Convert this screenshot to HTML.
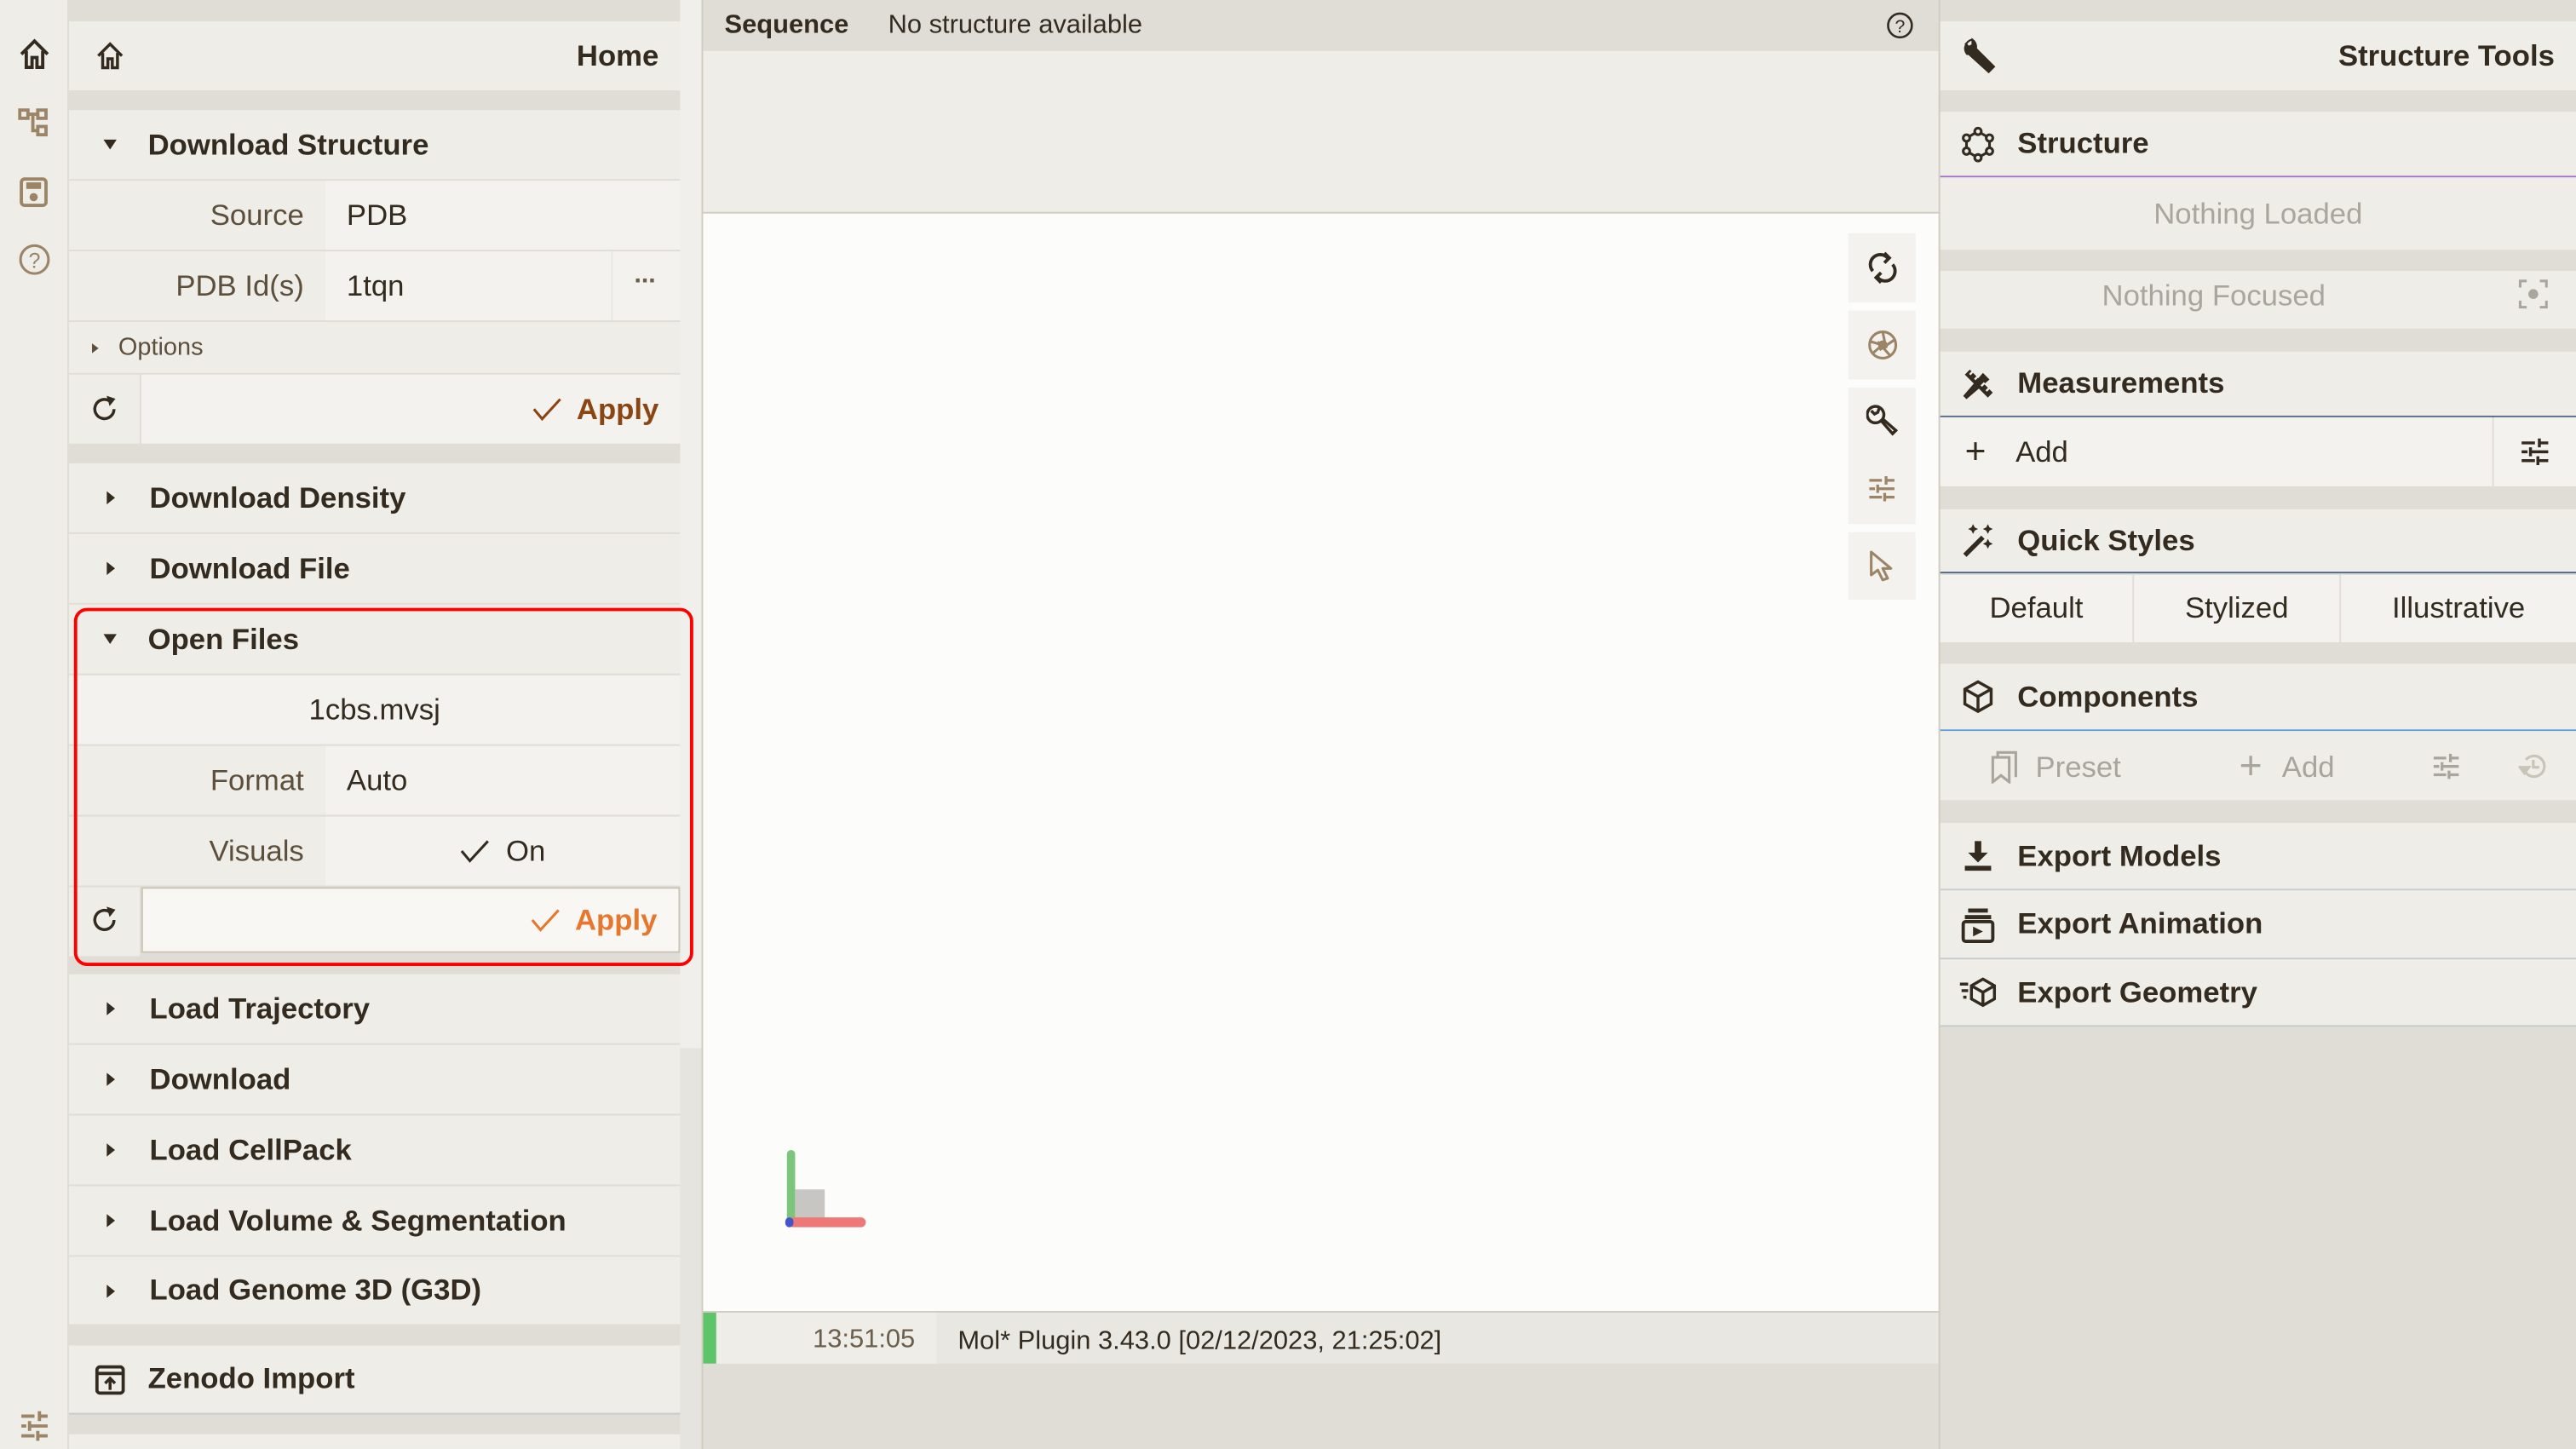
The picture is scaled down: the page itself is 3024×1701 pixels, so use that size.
<!DOCTYPE html>
<html><head><meta charset="utf-8"><style>
*{box-sizing:border-box;margin:0;padding:0}
html,body{width:3024px;height:1701px;overflow:hidden;background:#e0ddd6}
#s{position:absolute;left:0;top:0;width:1568px;height:882px;transform:scale(1.928571);transform-origin:0 0;font-family:"Liberation Sans",sans-serif;color:#332b1f;background:#e0ddd6}
.a{position:absolute}
.h{position:absolute;background:#eeede8;font-weight:bold;font-size:18px;display:flex;align-items:center}
.r{position:absolute;background:#f3f2ee;font-size:18px;display:flex;align-items:center}
.lb{position:absolute;background:#eeede8;color:#5c4f3c;text-align:right;padding-right:13px;font-size:18px;display:flex;align-items:center;justify-content:flex-end}
.tri{width:0;height:0;border-left:4px solid transparent;border-right:4px solid transparent;border-top:6px solid #332b1f;margin:0 19px 0 21px}
.tr{width:0;height:0;border-top:4px solid transparent;border-bottom:4px solid transparent;border-left:5px solid #332b1f;margin:0 21px 0 23px}
.ic{position:absolute;background:#f3f2ee}
svg{display:block}
</style></head><body><div id="s">
<div class="a" style="left:0;top:0;width:42px;height:882px;background:#eeede8;border-right:1px solid #e0ddd6"></div>
<svg class="a" style="left:11px;top:23px" width="20" height="20" viewBox="0 0 20 20"><path d="M2 10 L10 2 L18 10 M5 8 V18 H8.5 V12 H11.5 V18 H15 V8" fill="none" stroke="#332b1f" stroke-width="2"/></svg>
<svg class="a" style="left:11px;top:65px" width="20" height="20" viewBox="0 0 20 20" fill="none" stroke="#9c8566" stroke-width="2"><rect x="1" y="2" width="5" height="5"/><rect x="12" y="2" width="5" height="5"/><rect x="12" y="12" width="5" height="5"/><path d="M6 4.5 H12 M9 4.5 V14.5 H12"/></svg>
<svg class="a" style="left:11px;top:107px" width="20" height="20" viewBox="0 0 20 20"><rect x="2" y="2" width="15" height="16" rx="2" fill="none" stroke="#9c8566" stroke-width="2"/><rect x="5" y="4" width="9" height="4" fill="#9c8566"/><circle cx="9.5" cy="13" r="2.5" fill="#9c8566"/></svg>
<svg class="a" style="left:11px;top:148px" width="20" height="20" viewBox="0 0 20 20"><circle cx="10" cy="10" r="8.5" fill="none" stroke="#9c8566" stroke-width="1.6"/><text x="10" y="15" font-size="13" text-anchor="middle" fill="#9c8566" font-family="Liberation Sans">?</text></svg>
<svg class="a" style="left:11px;top:858px" width="20" height="20" viewBox="0 0 20 20" stroke="#9c8566" stroke-width="2"><path d="M2 4H10 M13 4H18 M13 1V7 M2 10H5 M8 10H18 M7 7V13 M2 16H10 M13 16H18 M12 13V19"/></svg>

<div class="a" style="left:414px;top:0;width:13px;height:882px;background:#e6e4df"></div>
<div class="a" style="left:414px;top:0;width:13px;height:638px;background:#f0efeb"></div>
<div class="a" style="left:427px;top:0;width:1px;height:882px;background:#d0ccc0"></div>

<div class="h" style="left:42px;top:13px;width:372px;height:42px;justify-content:space-between;padding:0 13px 0 16px"><svg width="18" height="18" viewBox="0 0 20 20"><path d="M2 10 L10 2 L18 10 M5 8 V18 H8.5 V12 H11.5 V18 H15 V8" fill="none" stroke="#332b1f" stroke-width="2"/></svg><span>Home</span></div>

<div class="h" style="left:42px;top:67px;width:372px;height:42px"><i class="tri"></i>Download Structure</div>
<div class="lb" style="left:42px;top:110px;width:156px;height:42px">Source</div>
<div class="r" style="left:198px;top:110px;width:216px;height:42px;padding-left:13px">PDB</div>
<div class="lb" style="left:42px;top:153px;width:156px;height:42px">PDB Id(s)</div>
<div class="r" style="left:198px;top:153px;width:216px;height:42px;padding-left:13px">1tqn</div>
<div class="a" style="left:372px;top:153px;width:1px;height:42px;background:#e8e6e0"></div>
<div class="a" style="left:386px;top:163px;font-size:16px;color:#6b5e4b;font-weight:bold;letter-spacing:-1px">···</div>
<div class="h" style="left:42px;top:196px;width:372px;height:31px;font-weight:normal;font-size:15px;color:#5c4f3c"><i class="tr" style="margin:0 12px 0 14px;border-left-color:#5c4f3c;border-top-width:3.5px;border-bottom-width:3.5px;border-left-width:4px"></i>Options</div>
<div class="a" style="left:42px;top:228px;width:43px;height:42px;background:#eeede8"></div>
<svg class="a" style="left:55px;top:240px" width="18" height="18" viewBox="0 0 20 20"><path d="M16 10 A6.5 6.5 0 1 1 13 4.5" fill="none" stroke="#332b1f" stroke-width="2"/><path d="M11 1 L17 3 L13 8 Z" fill="#332b1f"/></svg>
<div class="r" style="left:86px;top:228px;width:328px;height:42px;justify-content:flex-end;padding-right:13px;color:#8b4513;font-weight:bold">
<svg width="18" height="16" viewBox="0 0 18 16" style="margin-right:9px"><path d="M1 8 L6 14 L17 2" fill="none" stroke="#8b4513" stroke-width="1.6"/></svg>Apply</div>

<div class="h" style="left:42px;top:282px;width:372px;height:42px"><i class="tr"></i>Download Density</div>
<div class="h" style="left:42px;top:325px;width:372px;height:42px"><i class="tr"></i>Download File</div>
<div class="h" style="left:42px;top:368px;width:372px;height:42px"><i class="tri"></i>Open Files</div>
<div class="r" style="left:42px;top:411px;width:372px;height:42px;justify-content:center">1cbs.mvsj</div>
<div class="lb" style="left:42px;top:454px;width:156px;height:42px">Format</div>
<div class="r" style="left:198px;top:454px;width:216px;height:42px;padding-left:13px">Auto</div>
<div class="lb" style="left:42px;top:497px;width:156px;height:42px">Visuals</div>
<div class="r" style="left:198px;top:497px;width:216px;height:42px;justify-content:center"><svg width="18" height="16" viewBox="0 0 18 16" style="margin-right:10px"><path d="M1 8 L6 14 L17 2" fill="none" stroke="#332b1f" stroke-width="1.6"/></svg>On</div>
<div class="a" style="left:42px;top:540px;width:43px;height:42px;background:#eeede8"></div>
<svg class="a" style="left:55px;top:551px" width="18" height="18" viewBox="0 0 20 20"><path d="M16 10 A6.5 6.5 0 1 1 13 4.5" fill="none" stroke="#332b1f" stroke-width="2"/><path d="M11 1 L17 3 L13 8 Z" fill="#332b1f"/></svg>
<div class="r" style="left:86px;top:540px;width:328px;height:40px;background:#f8f7f3;border:1px solid #c9c4b8;justify-content:flex-end;padding-right:13px;color:#e8772e;font-weight:bold">
<svg width="18" height="16" viewBox="0 0 18 16" style="margin-right:9px"><path d="M1 8 L6 14 L17 2" fill="none" stroke="#e8772e" stroke-width="1.6"/></svg>Apply</div>
<div class="a" style="left:45px;top:370px;width:377px;height:218px;border:2px solid #f00;border-radius:8px"></div>

<div class="h" style="left:42px;top:593px;width:372px;height:42px"><i class="tr"></i>Load Trajectory</div>
<div class="h" style="left:42px;top:636px;width:372px;height:42px"><i class="tr"></i>Download</div>
<div class="h" style="left:42px;top:679px;width:372px;height:42px"><i class="tr"></i>Load CellPack</div>
<div class="h" style="left:42px;top:722px;width:372px;height:42px"><i class="tr"></i>Load Volume &amp; Segmentation</div>
<div class="h" style="left:42px;top:765px;width:372px;height:41px"><i class="tr"></i>Load Genome 3D (G3D)</div>
<div class="h" style="left:42px;top:819px;width:372px;height:42px;border-bottom:1px solid #c4ccd0"><svg width="18" height="18" viewBox="0 0 18 18" style="margin:0 14px 0 16px"><rect x="1" y="1" width="16" height="16" rx="2" fill="none" stroke="#332b1f" stroke-width="2"/><path d="M1 5H17" stroke="#332b1f" stroke-width="2"/><path d="M9 15V8 M6 11 L9 8 L12 11" fill="none" stroke="#332b1f" stroke-width="1.8"/></svg>Zenodo Import</div>
<div class="a" style="left:42px;top:873px;width:372px;height:9px;background:#eeede8"></div>

<div class="a" style="left:428px;top:0;width:752px;height:31px;background:#e0ddd6;font-size:16px;display:flex;align-items:center;padding-left:13px;padding-top:1px"><b>Sequence</b><span style="margin-left:24px">No structure available</span></div>
<svg class="a" style="left:1148px;top:7px" width="17" height="17" viewBox="0 0 20 20"><circle cx="10" cy="10" r="8.5" fill="none" stroke="#332b1f" stroke-width="1.6"/><text x="10" y="15" font-size="13" text-anchor="middle" fill="#332b1f" font-family="Liberation Sans">?</text></svg>
<div class="a" style="left:428px;top:31px;width:752px;height:98px;background:#eeede8"></div>
<div class="a" style="left:428px;top:129px;width:752px;height:1px;background:#d0ccc0"></div>
<div class="a" style="left:428px;top:130px;width:752px;height:668px;background:#fcfcfa"></div>
<div class="ic" style="left:1125px;top:142px;width:41px;height:42px"></div>
<div class="ic" style="left:1125px;top:189px;width:41px;height:42px"></div>
<div class="ic" style="left:1125px;top:236px;width:41px;height:83px"></div>
<div class="ic" style="left:1125px;top:324px;width:41px;height:41px"></div>
<svg class="a" style="left:1136px;top:153px" width="20" height="20" viewBox="0 0 20 20" fill="none" stroke="#332b1f" stroke-width="2"><path d="M4 12 A6 6 0 0 1 13 4"/><path d="M16 8 A6 6 0 0 1 7 16"/><path d="M11 1 L14 4 L11 7" /><path d="M9 13 L6 16 L9 19"/></svg>
<svg class="a" style="left:1136px;top:200px" width="20" height="20" viewBox="0 0 20 20" fill="none" stroke="#9c8566" stroke-width="1.6"><circle cx="10" cy="10" r="8"/><path d="M10 2 L12 12 M17 7 L8 13 M15 17 L7 8 M4 15 L12 8 M3 8 L13 11"/><circle cx="10" cy="10" r="2" fill="#9c8566"/></svg>
<svg class="a" style="left:1136px;top:246px" width="20" height="20" viewBox="0 0 20 20" fill="none" stroke="#332b1f" stroke-width="1.8"><path d="M8 2 A5 5 0 1 0 9 10 L16 18 L18 16 L10 9 A5 5 0 0 0 8 2 L7 5 L5 6 L3 4"/></svg>
<svg class="a" style="left:1137px;top:289px" width="17" height="17" viewBox="0 0 20 20" stroke="#9c8566" stroke-width="2"><path d="M1 4H10 M13 4H19 M13 1V7 M1 10H5 M8 10H19 M7 7V13 M1 16H10 M13 16H19 M12 13V19"/></svg>
<svg class="a" style="left:1137px;top:334px" width="17" height="20" viewBox="0 0 17 20"><path d="M2 2 L14 12 L9 12 L12 18 L9 19 L6 13 L2 16 Z" fill="none" stroke="#9c8566" stroke-width="1.6" stroke-linejoin="round"/></svg>
<div class="a" style="left:479px;top:700px;width:5px;height:46px;background:#6fbf6f;border-radius:3px;opacity:.9"></div>
<div class="a" style="left:484px;top:724px;width:18px;height:18px;background:#c8c6c2"></div>
<div class="a" style="left:480px;top:741px;width:47px;height:6px;background:#ee7777;border-radius:3px"></div>
<div class="a" style="left:478px;top:741px;width:5px;height:6px;background:#4455cc;border-radius:3px"></div>
<div class="a" style="left:428px;top:798px;width:752px;height:1px;background:#d0ccc0"></div>
<div class="a" style="left:428px;top:799px;width:752px;height:31px;background:#e8e7e2"></div>
<div class="a" style="left:428px;top:799px;width:8px;height:31px;background:#5dc46a"></div>
<div class="a" style="left:436px;top:799px;width:134px;height:31px;background:#eeede8;color:#6b5e4b;font-size:16px;display:flex;align-items:center;justify-content:flex-end;padding-right:13px;padding-top:2px">13:51:05</div>
<div class="a" style="left:583px;top:801px;height:31px;font-size:16px;display:flex;align-items:center">Mol* Plugin 3.43.0 [02/12/2023, 21:25:02]</div>

<div class="a" style="left:1180px;top:0;width:1px;height:882px;background:#d0ccc0"></div>
<div class="h" style="left:1181px;top:13px;width:387px;height:42px;justify-content:space-between;padding:0 13px 0 13px"><svg width="22" height="22" viewBox="0 0 20 20"><path d="M6 1 A5 5 0 0 0 3 9 L4 9 L15 19 L18 16 L8 6 A5 5 0 0 0 6 1 L6 4 L4 5 L2 3" fill="#332b1f" stroke="#332b1f" stroke-width="1"/></svg><span>Structure Tools</span></div>

<div class="h" style="left:1181px;top:68px;width:387px;height:40px;border-bottom:1.5px solid #a070c8"><svg width="22" height="22" viewBox="0 0 22 22" style="margin:0 13px 0 12px" fill="none" stroke="#332b1f" stroke-width="1.6"><path d="M11 3 L18 7 L18 15 L11 19 L4 15 L4 7 Z"/><circle cx="11" cy="3" r="2" fill="#eeede8"/><circle cx="18" cy="7" r="2" fill="#eeede8"/><circle cx="18" cy="15" r="2" fill="#eeede8"/><circle cx="11" cy="19" r="2" fill="#eeede8"/><circle cx="4" cy="15" r="2" fill="#eeede8"/><circle cx="4" cy="7" r="2" fill="#eeede8"/></svg>Structure</div>
<div class="r" style="left:1181px;top:108px;width:387px;height:44px;background:#eeede8;justify-content:center;color:#aaa69e">Nothing Loaded</div>
<div class="r" style="left:1181px;top:165px;width:387px;height:35px;background:#eeede8;justify-content:center;color:#aaa69e;padding-right:54px;padding-bottom:5px">Nothing Focused</div>
<svg class="a" style="left:1533px;top:170px" width="18" height="18" viewBox="0 0 18 18" fill="none" stroke="#aaa69e" stroke-width="1.6"><path d="M1 5V1H5 M13 1H17V5 M17 13V17H13 M5 17H1V13"/><circle cx="9" cy="9" r="3" fill="#aaa69e" stroke="none"/></svg>

<div class="h" style="left:1181px;top:214px;width:387px;height:40px;border-bottom:1.5px solid #4e6a8a"><svg width="22" height="22" viewBox="0 0 22 22" style="margin:0 13px 0 12px"><path d="M4 20 L2 18 L14 4 L18 8 Z" fill="#332b1f"/><path d="M3 5 L6 2 L20 16 L17 19 Z" fill="#332b1f"/><path d="M6 5 L8 3 M9 8 L11 6 M13 12 L15 10 M16 15 L18 13" stroke="#eeede8" stroke-width="1.3"/></svg>Measurements</div>
<div class="r" style="left:1181px;top:254px;width:336px;height:42px;padding-left:15px"><span style="font-size:22px;margin-right:18px;line-height:1">+</span>Add</div>
<div class="r" style="left:1518px;top:254px;width:50px;height:42px;justify-content:center"><svg width="18" height="18" viewBox="0 0 20 20" stroke="#332b1f" stroke-width="2"><path d="M1 4H10 M13 4H19 M13 1V7 M1 10H5 M8 10H19 M7 7V13 M1 16H10 M13 16H19 M12 13V19"/></svg></div>

<div class="h" style="left:1181px;top:310px;width:387px;height:39px;border-bottom:1.5px solid #4e6a8a"><svg width="22" height="22" viewBox="0 0 22 22" style="margin:0 13px 0 12px"><path d="M2 19 L13 8 L15 10 L4 21 Z" fill="#332b1f"/><path d="M8 1 L9 3 L11 4 L9 5 L8 7 L7 5 L5 4 L7 3Z M17 1 L18 3 L20 4 L18 5 L17 7 L16 5 L14 4 L16 3Z M17 10 L18 12 L20 13 L18 14 L17 16 L16 14 L14 13 L16 12Z" fill="#332b1f"/></svg>Quick Styles</div>
<div class="r" style="left:1181px;top:350px;width:117px;height:41px;justify-content:center">Default</div>
<div class="r" style="left:1299px;top:350px;width:125px;height:41px;justify-content:center">Stylized</div>
<div class="r" style="left:1425px;top:350px;width:143px;height:41px;justify-content:center">Illustrative</div>

<div class="h" style="left:1181px;top:404px;width:387px;height:41px;border-bottom:1.5px solid #5a9ee0"><svg width="20" height="22" viewBox="0 0 20 22" style="margin:0 14px 0 13px" fill="none" stroke="#332b1f" stroke-width="1.8"><path d="M10 2 L18 6.5 V15.5 L10 20 L2 15.5 V6.5 Z M2 6.5 L10 11 L18 6.5 M10 11 V20"/></svg>Components</div>
<div class="r" style="left:1181px;top:445px;width:387px;height:42px;background:#eeede8;color:#a9a59d">
<svg class="a" style="left:31px;top:12px" width="16" height="20" viewBox="0 0 16 20" fill="none" stroke="#a9a59d" stroke-width="1.6"><path d="M1 4 V19 L6 15 L11 19 V4 Z M4 4 V1 H15 V16"/></svg>
<span class="a" style="left:58px;top:12px">Preset</span>
<span class="a" style="left:182px;top:10px;font-size:24px;line-height:1">+</span>
<span class="a" style="left:208px;top:12px">Add</span>
<svg class="a" style="left:299px;top:13px" width="18" height="17" viewBox="0 0 20 20" stroke="#a9a59d" stroke-width="2"><path d="M1 4H10 M13 4H19 M13 1V7 M1 10H5 M8 10H19 M7 7V13 M1 16H10 M13 16H19 M12 13V19"/></svg>
<svg class="a" style="left:352px;top:13px" width="18" height="18" viewBox="0 0 20 20" fill="none" stroke="#c9c4b8" stroke-width="1.8"><path d="M4 12 A7 7 0 1 0 5 5"/><path d="M10 5V10H14"/><path d="M1 10 L4 14 L7 10 Z" fill="#c9c4b8"/></svg>
</div>

<div class="h" style="left:1181px;top:501px;width:387px;height:41px;border-bottom:1px solid #c4ccd0"><svg width="20" height="20" viewBox="0 0 20 20" style="margin:0 14px 0 13px" fill="#332b1f"><path d="M8 1H12V8H16L10 14L4 8H8Z"/><rect x="2" y="16" width="16" height="3"/></svg>Export Models</div>
<div class="h" style="left:1181px;top:542px;width:387px;height:42px;border-bottom:1px solid #c4ccd0"><svg width="22" height="22" viewBox="0 0 22 22" style="margin:0 13px 0 12px"><rect x="5" y="1" width="12" height="2.5" fill="#332b1f"/><rect x="3" y="5" width="16" height="2.5" fill="#332b1f"/><rect x="2" y="9" width="18" height="12" rx="1.5" fill="none" stroke="#332b1f" stroke-width="2"/><path d="M8 12 L14 15 L8 18Z" fill="#332b1f"/></svg>Export Animation</div>
<div class="h" style="left:1181px;top:584px;width:387px;height:41px;border-bottom:1px solid #c4ccd0"><svg width="24" height="20" viewBox="0 0 24 20" style="margin:0 12px 0 11px"><path d="M1 5H6 M2 9H6 M3 13H5" stroke="#332b1f" stroke-width="1.8"/><path d="M15 2 L22 6 V14 L15 18 L8 14 V6 Z M8 6 L15 10 L22 6 M15 10 V18" fill="none" stroke="#332b1f" stroke-width="1.8"/></svg>Export Geometry</div>
</div></body></html>
